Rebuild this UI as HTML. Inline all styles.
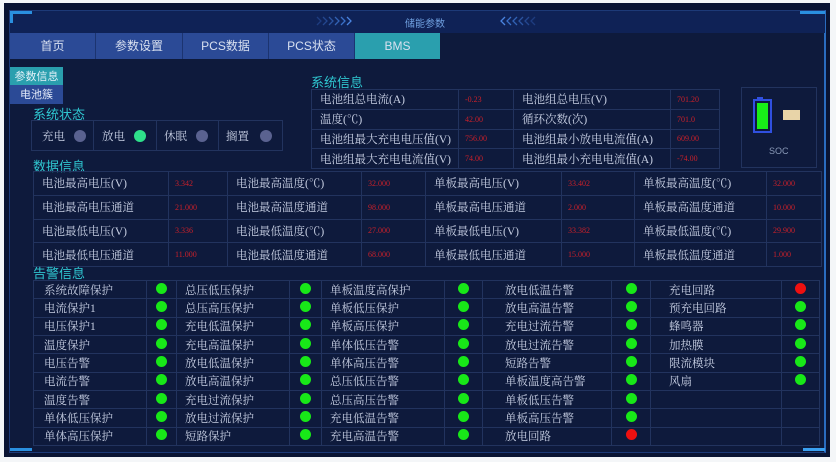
<!DOCTYPE html>
<html><head><meta charset="utf-8">
<style>
*{margin:0;padding:0;box-sizing:border-box}
body{width:836px;height:462px;background:#f4f6f8;position:relative;overflow:hidden;font-family:"Liberation Serif","Noto Serif CJK SC",serif}
.a{position:absolute}
.frame{left:4px;top:3px;width:826px;height:454px;background:#0a1433}
.inner{left:9px;top:10px;width:817px;height:443px;background:#0e1a3c;border:1px solid #1d3a78;border-right:2px solid #2a6cc0}
.title{left:10px;top:11px;width:815px;height:22px;background:#0f2256}
.tab{top:33px;height:26px;background:#2b4a96;color:#d8e0f0;font:12px "Liberation Sans","Noto Sans CJK SC",sans-serif;text-align:center;line-height:26px;border-right:1px solid #1c3470}
.h{color:#2fc6d0;font:13px "Liberation Sans","Noto Sans CJK SC",sans-serif}
table{border-collapse:collapse;position:absolute;table-layout:fixed}
td{border:1px solid #22335e;color:#c8d0e4;font-size:11.5px;padding:0 0 0 8px;white-space:nowrap;overflow:hidden}
td.v{color:#c8202a;font-size:8px;padding-left:6px}
.dot{display:inline-block;width:11px;height:11px;border-radius:50%;background:#18e818}
.r{background:#ee1010}
td.d{padding:0;text-align:center}
</style></head><body>
<div class="a frame"></div>
<div class="a inner"></div>
<div class="a title"></div>
<div class="a" style="left:10px;top:11px;width:22px;height:3px;background:#2a90e0"></div>
<div class="a" style="left:10px;top:11px;width:3px;height:12px;background:#2a90e0"></div>
<div class="a" style="left:800px;top:11px;width:25px;height:3px;background:#2a90e0"></div>
<div class="a" style="left:10px;top:448px;width:22px;height:3px;background:#2a90e0"></div>
<div class="a" style="left:803px;top:448px;width:22px;height:3px;background:#3aa0f0"></div>
<svg class="a" style="left:316px;top:15px" width="42" height="12" viewBox="0 0 42 12" fill="none" stroke-width="1.3">
<polyline points="1,2 5,6 1,10" stroke="#1e3c80"/><polyline points="7,2 11,6 7,10" stroke="#24478f"/><polyline points="13,2 17,6 13,10" stroke="#2b54a0"/><polyline points="19,2 23,6 19,10" stroke="#3262b4"/><polyline points="25,2 29,6 25,10" stroke="#3a70c8"/><polyline points="31,2 35,6 31,10" stroke="#4a84e0"/></svg>
<svg class="a" style="left:500px;top:15px" width="42" height="12" viewBox="0 0 42 12" fill="none" stroke-width="1.3">
<polyline points="5,2 1,6 5,10" stroke="#4a84e0"/><polyline points="11,2 7,6 11,10" stroke="#3a70c8"/><polyline points="17,2 13,6 17,10" stroke="#3262b4"/><polyline points="23,2 19,6 23,10" stroke="#2b54a0"/><polyline points="29,2 25,6 29,10" stroke="#24478f"/><polyline points="35,2 31,6 35,10" stroke="#1e3c80"/></svg>
<div class="a" style="left:405px;top:15px;color:#6fa0e0;font:10px 'Noto Sans CJK SC',sans-serif">储能参数</div>
<div class="a tab" style="left:10px;width:86px">首页</div>
<div class="a tab" style="left:96px;width:87px">参数设置</div>
<div class="a tab" style="left:183px;width:86px">PCS数据</div>
<div class="a tab" style="left:269px;width:86px">PCS状态</div>
<div class="a tab" style="left:355px;width:85px;background:#2a9fae;border:none">BMS</div>
<div class="a" style="left:10px;top:67px;width:53px;height:18px;background:#2a9fae;color:#e0f0f8;font:11px 'Noto Sans CJK SC',sans-serif;line-height:18px;text-align:center">参数信息</div>
<div class="a" style="left:10px;top:85px;width:53px;height:19px;background:#2b4a96;color:#e0e8f8;font:11px 'Noto Sans CJK SC',sans-serif;line-height:19px;text-align:center">电池簇</div>
<div class="a h" style="left:33px;top:104px">系统状态</div>
<table style="left:31px;top:120px;width:252px;height:31px"><tr>
<td style="width:62px;padding-left:10px">充电 <span class="dot" style="background:#5a6290;margin-left:6px;width:12px;height:12px;vertical-align:-2px"></span></td>
<td style="width:63px;padding-left:8px">放电 <span class="dot" style="background:#2ee08a;margin-left:6px;width:12px;height:12px;vertical-align:-2px"></span></td>
<td style="width:62px;padding-left:7px">休眠 <span class="dot" style="background:#5a6290;margin-left:6px;width:12px;height:12px;vertical-align:-2px"></span></td>
<td style="padding-left:7px">搁置 <span class="dot" style="background:#5a6290;margin-left:8px;width:12px;height:12px;vertical-align:-2px"></span></td>
</tr></table>
<div class="a h" style="left:311px;top:72px">系统信息</div>
<table style="left:311px;top:89px;width:409px;height:80px">
<tr><td style="width:147px">电池组总电流(A)</td><td class="v" style="width:55px">-0.23</td><td style="width:157px">电池组总电压(V)</td><td class="v">701.20</td></tr>
<tr><td>温度(℃)</td><td class="v">42.00</td><td>循环次数(次)</td><td class="v">701.0</td></tr>
<tr><td>电池组最大充电电压值(V)</td><td class="v">756.00</td><td>电池组最小放电电流值(A)</td><td class="v">609.00</td></tr>
<tr><td>电池组最大充电电流值(V)</td><td class="v">74.00</td><td>电池组最小充电电流值(A)</td><td class="v">-74.00</td></tr>
</table>
<div class="a" style="left:741px;top:87px;width:76px;height:81px;border:1px solid #22335e"></div>
<div class="a" style="left:757px;top:97px;width:6px;height:3px;background:#3050e0"></div>
<div class="a" style="left:753px;top:99px;width:19px;height:34px;border:2px solid #3050e0;padding:2px"><div style="width:100%;height:100%;background:#18ee18"></div></div>
<div class="a" style="left:783px;top:110px;width:17px;height:10px;background:#e8d4a8"></div>
<div class="a" style="left:769px;top:146px;color:#8a9ab8;font:9px 'Liberation Sans',sans-serif">SOC</div>
<div class="a h" style="left:33px;top:156px">数据信息</div>
<table style="left:33px;top:171px;width:789px;height:96px">
<tr><td style="width:135px">电池最高电压(V)</td><td class="v" style="width:59px">3.342</td><td style="width:134px">电池最高温度(℃)</td><td class="v" style="width:64px">32.000</td><td style="width:136px">单板最高电压(V)</td><td class="v" style="width:73px">33.402</td><td style="width:132px">单板最高温度(℃)</td><td class="v">32.000</td></tr>
<tr><td>电池最高电压通道</td><td class="v">21.000</td><td>电池最高温度通道</td><td class="v">98.000</td><td>单板最高电压通道</td><td class="v">2.000</td><td>单板最高温度通道</td><td class="v">10.000</td></tr>
<tr><td>电池最低电压(V)</td><td class="v">3.336</td><td>电池最低温度(℃)</td><td class="v">27.000</td><td>单板最低电压(V)</td><td class="v">33.382</td><td>单板最低温度(℃)</td><td class="v">29.900</td></tr>
<tr><td>电池最低电压通道</td><td class="v">11.000</td><td>电池最低温度通道</td><td class="v">68.000</td><td>单板最低电压通道</td><td class="v">15.000</td><td>单板最低温度通道</td><td class="v">1.000</td></tr>
</table>
<div class="a h" style="left:33px;top:263px">告警信息</div>
<table style="left:33px;top:280px;width:787px;height:166px">
<tr><td style="width:113px;padding-left:10px">系统故障保护</td><td class="d" style="width:30px"><span class="dot"></span></td><td style="width:113px">总压低压保护</td><td class="d" style="width:32px"><span class="dot"></span></td><td style="width:123px">单板温度高保护</td><td class="d" style="width:38px"><span class="dot"></span></td><td style="width:129px;padding-left:22px">放电低温告警</td><td class="d" style="width:39px"><span class="dot"></span></td><td style="width:131px;padding-left:18px">充电回路</td><td class="d"><span class="dot r"></span></td></tr>
<tr><td style="padding-left:10px">电流保护1</td><td class="d"><span class="dot"></span></td><td>总压高压保护</td><td class="d"><span class="dot"></span></td><td>单板低压保护</td><td class="d"><span class="dot"></span></td><td style="padding-left:22px">放电高温告警</td><td class="d"><span class="dot"></span></td><td style="padding-left:18px">预充电回路</td><td class="d"><span class="dot"></span></td></tr>
<tr><td style="padding-left:10px">电压保护1</td><td class="d"><span class="dot"></span></td><td>充电低温保护</td><td class="d"><span class="dot"></span></td><td>单板高压保护</td><td class="d"><span class="dot"></span></td><td style="padding-left:22px">充电过流告警</td><td class="d"><span class="dot"></span></td><td style="padding-left:18px">蜂鸣器</td><td class="d"><span class="dot"></span></td></tr>
<tr><td style="padding-left:10px">温度保护</td><td class="d"><span class="dot"></span></td><td>充电高温保护</td><td class="d"><span class="dot"></span></td><td>单体低压告警</td><td class="d"><span class="dot"></span></td><td style="padding-left:22px">放电过流告警</td><td class="d"><span class="dot"></span></td><td style="padding-left:18px">加热膜</td><td class="d"><span class="dot"></span></td></tr>
<tr><td style="padding-left:10px">电压告警</td><td class="d"><span class="dot"></span></td><td>放电低温保护</td><td class="d"><span class="dot"></span></td><td>单体高压告警</td><td class="d"><span class="dot"></span></td><td style="padding-left:22px">短路告警</td><td class="d"><span class="dot"></span></td><td style="padding-left:18px">限流模块</td><td class="d"><span class="dot"></span></td></tr>
<tr><td style="padding-left:10px">电流告警</td><td class="d"><span class="dot"></span></td><td>放电高温保护</td><td class="d"><span class="dot"></span></td><td>总压低压告警</td><td class="d"><span class="dot"></span></td><td style="padding-left:22px">单板温度高告警</td><td class="d"><span class="dot"></span></td><td style="padding-left:18px">风扇</td><td class="d"><span class="dot"></span></td></tr>
<tr><td style="padding-left:10px">温度告警</td><td class="d"><span class="dot"></span></td><td>充电过流保护</td><td class="d"><span class="dot"></span></td><td>总压高压告警</td><td class="d"><span class="dot"></span></td><td style="padding-left:22px">单板低压告警</td><td class="d"><span class="dot"></span></td><td></td><td></td></tr>
<tr><td style="padding-left:10px">单体低压保护</td><td class="d"><span class="dot"></span></td><td>放电过流保护</td><td class="d"><span class="dot"></span></td><td>充电低温告警</td><td class="d"><span class="dot"></span></td><td style="padding-left:22px">单板高压告警</td><td class="d"><span class="dot"></span></td><td></td><td></td></tr>
<tr><td style="padding-left:10px">单体高压保护</td><td class="d"><span class="dot"></span></td><td>短路保护</td><td class="d"><span class="dot"></span></td><td>充电高温告警</td><td class="d"><span class="dot"></span></td><td style="padding-left:22px">放电回路</td><td class="d"><span class="dot r"></span></td><td></td><td></td></tr>
</table>
</body></html>
